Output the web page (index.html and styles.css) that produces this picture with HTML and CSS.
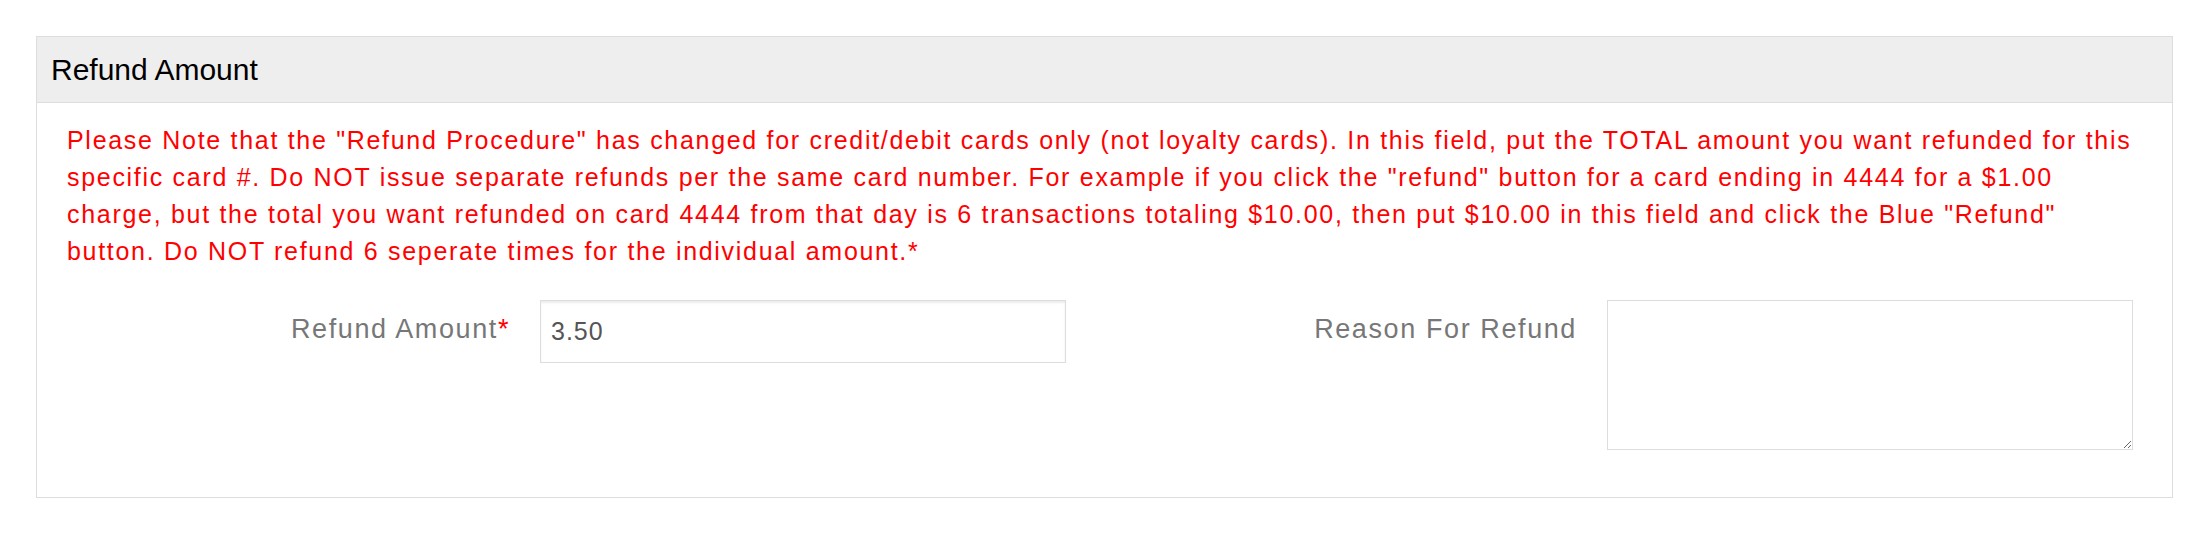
FILE: index.html
```html
<!DOCTYPE html>
<html lang="en">
<head>
  <meta charset="UTF-8">
  <title>Refund Amount</title>
  <link rel="stylesheet" href="styles.css">
</head>
<body>

<div class="panel">
  <div class="panel-heading">Refund Amount</div>
  <div class="panel-body">
    <p class="note">Please Note that the "Refund Procedure" has changed for credit/debit cards only (not loyalty cards). In this field, put the TOTAL amount you want refunded for this specific card #. Do NOT issue separate refunds per the same card number. For example if you click the "refund" button for a card ending in 4444 for a $1.00 charge, but the total you want refunded on card 4444 from that day is 6 transactions totaling $10.00, then put $10.00 in this field and click the Blue "Refund" button. Do NOT refund 6 seperate times for the individual amount.*</p>

    <form class="form-row">
      <div class="form-group">
        <label for="refund_amount">Refund Amount<span class="req">*</span></label>
        <input type="text" id="refund_amount" value="3.50">
      </div>
      <div class="form-group">
        <label for="refund_reason">Reason For Refund</label>
        <textarea id="refund_reason"></textarea>
      </div>
    </form>
  </div>
</div>

</body>
</html>
```

FILE: styles.css
```css
body {
  margin: 0;
  padding: 36px 37px 0 36px;
  font-family: "Liberation Sans", Arial, sans-serif;
  background: #fff;
}

.panel {
  border: 1px solid #ddd;
  background: #fff;
}

.panel-heading {
  background-color: #eee;
  border-bottom: 1px solid #ddd;
  height: 65px;
  line-height: 65px;
  padding-left: 14px;
  font-size: 30px;
  color: #000;
}

.panel-body {
  padding: 19px 29px 47px 30px;
}

.note {
  margin: 0 0 30px 0;
  color: #f00;
  font-size: 25px;
  line-height: 37px;
  letter-spacing: 1.7px;
}

.form-row {
  display: grid;
  grid-template-columns: 1067px 1067px;
}

.form-group {
  display: flex;
  align-items: flex-start;
}

label {
  width: 443px;
  margin-right: 30px;
  text-align: right;
  color: #777;
  font-size: 27px;
  letter-spacing: 1.6px;
  padding-top: 14px;
  line-height: 30px;
}

.req {
  color: #f00;
}

input,
textarea {
  width: 526px;
  box-sizing: border-box;
  border: 1px solid #ddd;
  font-family: "Liberation Sans", Arial, sans-serif;
  color: #555;
  margin: 0;
}

input {
  height: 63px;
  padding: 0 10px;
  font-size: 25px;
  letter-spacing: 1px;
  box-shadow: inset 0 2px 2px rgba(0,0,0,0.075);
}

textarea {
  height: 150px;
  padding: 10px;
  font-size: 25px;
}
```
